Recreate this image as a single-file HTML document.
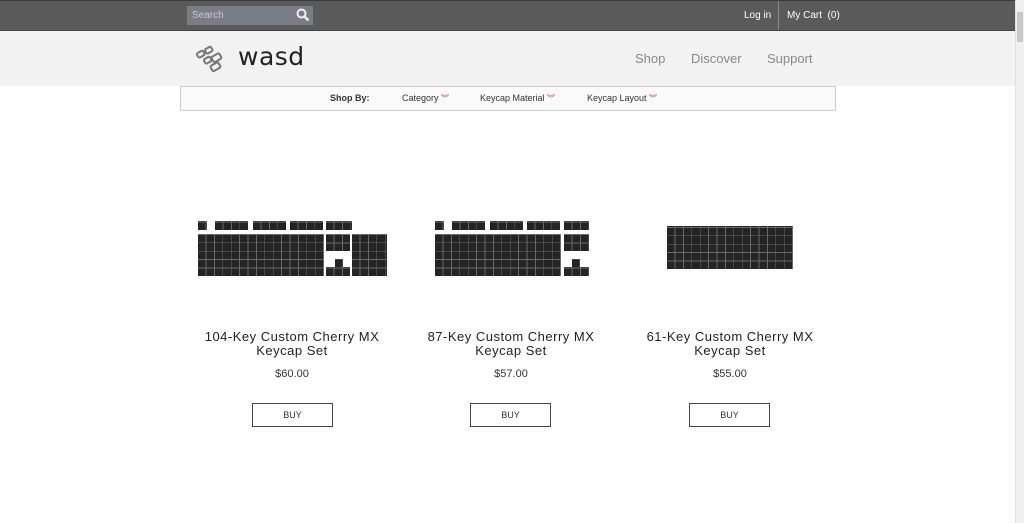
<!DOCTYPE html>
<html><head><meta charset="utf-8"><style>
*{margin:0;padding:0;box-sizing:border-box}
body{width:1024px;height:523px;overflow:hidden;background:#fff;font-family:"Liberation Sans",sans-serif;position:relative}
.a{position:absolute}
.top{left:0;top:0;width:1015px;height:31px;background:#5a5a5a;border-top:1px solid #3a3a3a;border-bottom:1px solid #444}
.hdr{left:0;top:31px;width:1015px;height:55px;background:#f2f2f2}
.sb{left:1015px;top:0;width:9px;height:523px;background:#f0f0f0;border-left:1px solid #e0e0e0}
.k{background-color:#242424;background-image:repeating-linear-gradient(90deg,transparent 0 7.6px,#6a6a6a 7.6px 8.4px),repeating-linear-gradient(0deg,transparent 0 7.6px,#6a6a6a 7.6px 8.4px)}
.t{font-size:13px;color:#222;text-align:center;letter-spacing:.5px;line-height:14px}
.p{font-size:11px;color:#333;text-align:center}
.b{width:81px;height:24px;border:1px solid #444;font-size:9px;color:#333;text-align:center;line-height:22px}
.f{font-size:9px;color:#333;top:93px}
.v{color:#c0392b;font-size:8px}
.n{font-size:13px;color:#888;top:51px}
</style></head><body>
<div class="a top"></div>
<div class="a" style="left:187px;top:6px;width:126px;height:19px;background:#7a7d85"></div>
<div class="a" style="left:192px;top:10px;font-size:10px;color:#c8c8cc">Search</div>
<svg class="a" style="left:296px;top:8px" width="14" height="14" viewBox="0 0 14 14"><circle cx="5.5" cy="5.5" r="4" fill="none" stroke="#eee" stroke-width="2"/><line x1="8.5" y1="8.5" x2="12.5" y2="12.5" stroke="#eee" stroke-width="2.5"/></svg>
<div class="a" style="left:744px;top:10px;font-size:10px;color:#fff">Log in</div>
<div class="a" style="left:778px;top:1px;width:1px;height:29px;background:#888"></div>
<div class="a" style="left:787px;top:10px;font-size:10px;color:#fff">My Cart &nbsp;(0)</div>
<div class="a hdr"></div>
<svg class="a" style="left:195px;top:45px" width="36" height="28" viewBox="0 0 36 28"><g fill="none" stroke="#777" stroke-width="2"><rect x="2" y="7" width="7" height="5" rx="1.5" transform="rotate(-30 5 9)"/><rect x="10" y="3" width="7" height="5" rx="1.5" transform="rotate(-30 13 5)"/><rect x="9" y="13" width="7" height="5" rx="1.5" transform="rotate(-30 12 15)"/><rect x="17" y="10" width="9" height="6" rx="1.5" transform="rotate(-30 21 13)"/><rect x="16" y="19" width="9" height="6" rx="1.5" transform="rotate(-30 20 22)"/></g></svg>
<div class="a" style="left:238px;top:42px;font-size:25px;color:#222;font-family:'DejaVu Sans',sans-serif;letter-spacing:0.5px">wasd</div>
<div class="a n" style="left:635px">Shop</div>
<div class="a n" style="left:691px">Discover</div>
<div class="a n" style="left:767px">Support</div>
<div class="a" style="left:180px;top:86px;width:656px;height:25px;border:1px solid #ccc;background:#fafafa"></div>
<div class="a f" style="left:330px;font-weight:bold">Shop By:</div>
<div class="a f" style="left:402px">Category <span class="v">︾</span></div>
<div class="a f" style="left:480px">Keycap Material <span class="v">︾</span></div>
<div class="a f" style="left:587px">Keycap Layout <span class="v">︾</span></div>
<!-- 104 -->
<div class="a k" style="left:198px;top:221px;width:9px;height:9px"></div>
<div class="a k" style="left:215px;top:221px;width:33px;height:9px"></div>
<div class="a k" style="left:253px;top:221px;width:33px;height:9px"></div>
<div class="a k" style="left:290px;top:221px;width:33px;height:9px"></div>
<div class="a k" style="left:326px;top:221px;width:26px;height:9px"></div>
<div class="a k" style="left:198px;top:234px;width:126px;height:42px"></div>
<div class="a k" style="left:326px;top:234px;width:24px;height:17px"></div>
<div class="a k" style="left:335px;top:259px;width:8px;height:8px"></div>
<div class="a k" style="left:326px;top:267px;width:24px;height:9px"></div>
<div class="a k" style="left:352px;top:234px;width:35px;height:42px"></div>
<!-- 87 -->
<div class="a k" style="left:435px;top:221px;width:9px;height:9px"></div>
<div class="a k" style="left:452px;top:221px;width:33px;height:9px"></div>
<div class="a k" style="left:490px;top:221px;width:33px;height:9px"></div>
<div class="a k" style="left:527px;top:221px;width:33px;height:9px"></div>
<div class="a k" style="left:564px;top:221px;width:25px;height:9px"></div>
<div class="a k" style="left:435px;top:234px;width:126px;height:42px"></div>
<div class="a k" style="left:564px;top:234px;width:25px;height:17px"></div>
<div class="a k" style="left:572px;top:259px;width:8px;height:8px"></div>
<div class="a k" style="left:564px;top:267px;width:25px;height:9px"></div>
<!-- 61 -->
<div class="a k" style="left:667px;top:226px;width:126px;height:43px"></div>
<div class="a t" style="left:192px;top:330px;width:200px">104-Key Custom Cherry MX<br>Keycap Set</div>
<div class="a t" style="left:411px;top:330px;width:200px">87-Key Custom Cherry MX<br>Keycap Set</div>
<div class="a t" style="left:630px;top:330px;width:200px">61-Key Custom Cherry MX<br>Keycap Set</div>
<div class="a p" style="left:242px;top:368px;width:100px">$60.00</div>
<div class="a p" style="left:461px;top:368px;width:100px">$57.00</div>
<div class="a p" style="left:680px;top:368px;width:100px">$55.00</div>
<div class="a b" style="left:252px;top:403px">BUY</div>
<div class="a b" style="left:470px;top:403px">BUY</div>
<div class="a b" style="left:689px;top:403px">BUY</div>
<div class="a sb"></div>
<div class="a" style="left:1017px;top:12px;width:6px;height:30px;background:#c8c8c8"></div>
</body></html>
